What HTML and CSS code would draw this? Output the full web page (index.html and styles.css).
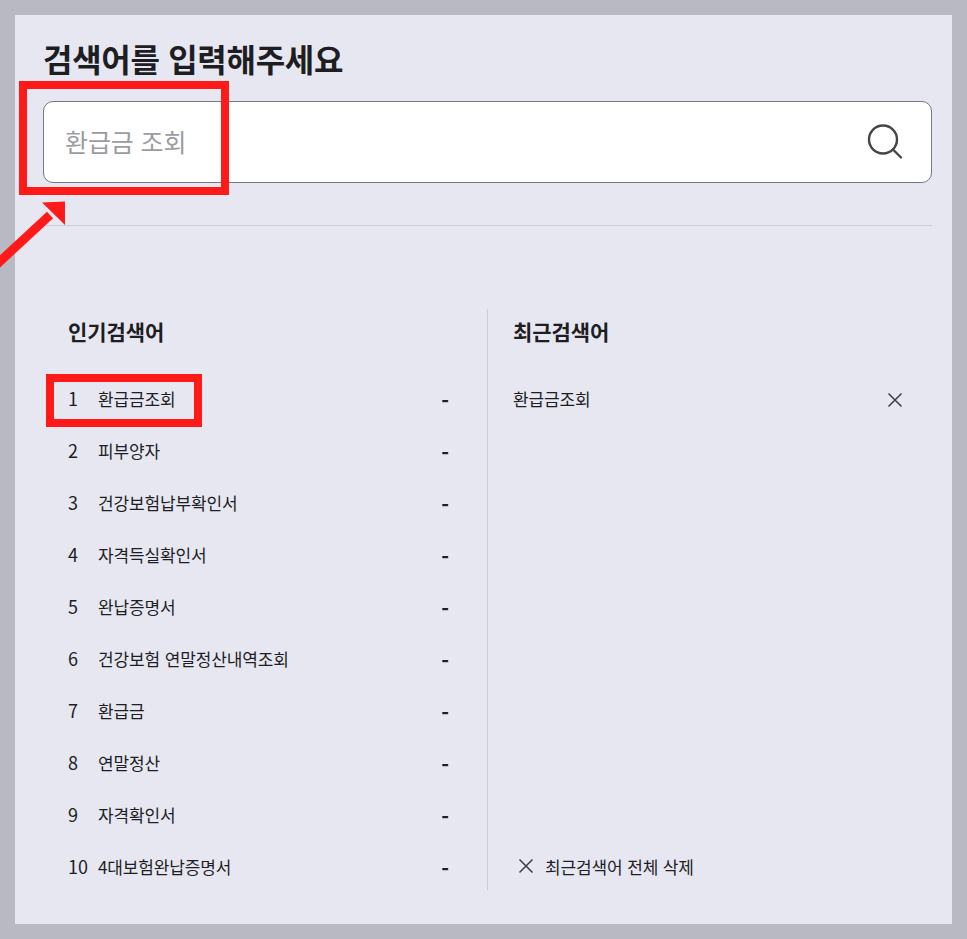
FILE: index.html
```html
<!DOCTYPE html>
<html lang="ko">
<head>
<meta charset="utf-8">
<title>검색</title>
<link rel="stylesheet" href="styles.css">
</head>
<body>
<main class="panel">
  <h1 class="title">검색어를 입력해주세요</h1>
  <div class="search">
    <span class="placeholder">환급금 조회</span>
    <svg class="search-icon" width="36" height="36" viewBox="0 0 36 36" fill="none" stroke="#45454a" stroke-width="2.4" stroke-linecap="round"><circle cx="16" cy="15.5" r="14"/><path d="M26 25.5l8 8"/></svg>
  </div>
  <hr class="rule">
  <div class="columns">
    <section class="col col-popular">
      <h2 class="col-title">인기검색어</h2>
      <ol class="list">
        <li class="row"><span class="num">1</span><span class="term">환급금조회</span><span class="dash">-</span></li>
        <li class="row"><span class="num">2</span><span class="term">피부양자</span><span class="dash">-</span></li>
        <li class="row"><span class="num">3</span><span class="term">건강보험납부확인서</span><span class="dash">-</span></li>
        <li class="row"><span class="num">4</span><span class="term">자격득실확인서</span><span class="dash">-</span></li>
        <li class="row"><span class="num">5</span><span class="term">완납증명서</span><span class="dash">-</span></li>
        <li class="row"><span class="num">6</span><span class="term">건강보험 연말정산내역조회</span><span class="dash">-</span></li>
        <li class="row"><span class="num">7</span><span class="term">환급금</span><span class="dash">-</span></li>
        <li class="row"><span class="num">8</span><span class="term">연말정산</span><span class="dash">-</span></li>
        <li class="row"><span class="num">9</span><span class="term">자격확인서</span><span class="dash">-</span></li>
        <li class="row"><span class="num">10</span><span class="term">4대보험완납증명서</span><span class="dash">-</span></li>
      </ol>
    </section>
    <section class="col col-recent">
      <h2 class="col-title">최근검색어</h2>
      <div class="row recent-row">
        <span class="term">환급금조회</span>
        <svg class="x" width="16" height="16" viewBox="0 0 16 16" fill="none" stroke="#3c3c42" stroke-width="1.5"><path d="M1.5 1.500l13 13M14.500 1.500l-13 13"/></svg>
      </div>
      <div class="row clear-row">
        <svg class="x" width="16" height="16" viewBox="0 0 16 16" fill="none" stroke="#3c3c42" stroke-width="1.5"><path d="M1.5 1.500l13 13M14.500 1.500l-13 13"/></svg>
        <span class="term">최근검색어 전체 삭제</span>
      </div>
    </section>
  </div>
  <div class="mark mark-input"></div>
  <div class="mark mark-row"></div>
</main>
<svg class="arrow" width="70" height="75" viewBox="0 0 70 75"><path d="M-5 71L50 20" stroke="#ff1a1a" stroke-width="9" fill="none"/><path d="M42 7.500L65 6.500V30Z" fill="#ff1a1a"/></svg>
</body>
</html>
```
FILE: styles.css
```css
* { box-sizing: border-box; }
html, body { margin: 0; height: 100%; }
body {
  background: #b9b9c3;
  padding: 15px;
  height: 939px;
  overflow: hidden;
  position: relative;
  font-family: "Noto Sans CJK KR", "Noto Sans", sans-serif;
  color: #1e1e22;
}
.panel {
  position: relative;
  width: 937px;
  height: 909px;
  background: #e7e7f2;
  padding: 22px 20px 0 28px;
}
.title {
  margin: 0;
  font-size: 32px;
  line-height: 42px;
  font-weight: 700;
  letter-spacing: -0.3px;
  color: #1e1e22;
}
.search {
  margin-top: 22px;
  height: 82px;
  background: #fff;
  border: 1px solid #77777f;
  border-radius: 10px;
  display: flex;
  align-items: center;
  justify-content: space-between;
  padding: 0 28px 0 21px;
}
.placeholder { font-size: 25px; line-height: 1; color: #9c9ca1; letter-spacing: -0.1px; padding-bottom: 2px; }
.search-icon { display: block; }
.rule {
  margin: 42px 0 0;
  border: 0;
  border-top: 1px solid #cdcdd8;
}
.columns {
  display: flex;
  margin-top: 83px;
  height: 581px;
}
.col { display: flex; flex-direction: column; }
.col-popular {
  width: 445px;
  padding: 0 38px 0 25px;
  border-right: 1px solid #cdcdd5;
}
.col-recent { flex: 1; padding: 0 28px 0 25px; }
.col-title {
  margin: 0 0 19px;
  font-size: 21px;
  line-height: 44px;
  font-weight: 700;
  letter-spacing: -0.1px;
  color: #1e1e22;
}
.list { margin: 0; padding: 0; list-style: none; }
.row {
  display: flex;
  align-items: center;
  height: 52px;
  font-size: 17px;
  letter-spacing: -0.13px;
}
.num { width: 30px; flex: none; font-size: 18px; letter-spacing: 0; }
.term { flex: 1; }
.dash { font-weight: 700; font-size: 21px; line-height: 1; padding-top: 5px; }
.recent-row .x { margin: 4px 1px 0 0; }
.clear-row { margin-top: auto; margin-bottom: -2px; padding-left: 5px; }
.clear-row .x { margin-top: 0; }
.clear-row .term { margin-left: 11px; }
.x { display: block; flex: none; }
.mark { position: absolute; border: 8px solid #ff1a1a; }
.mark-input { left: 4px; top: 66px; width: 210px; height: 114px; }
.mark-row { left: 31px; top: 359px; width: 156px; height: 53px; }
.arrow { position: absolute; left: 0; top: 195px; overflow: hidden; }
```
